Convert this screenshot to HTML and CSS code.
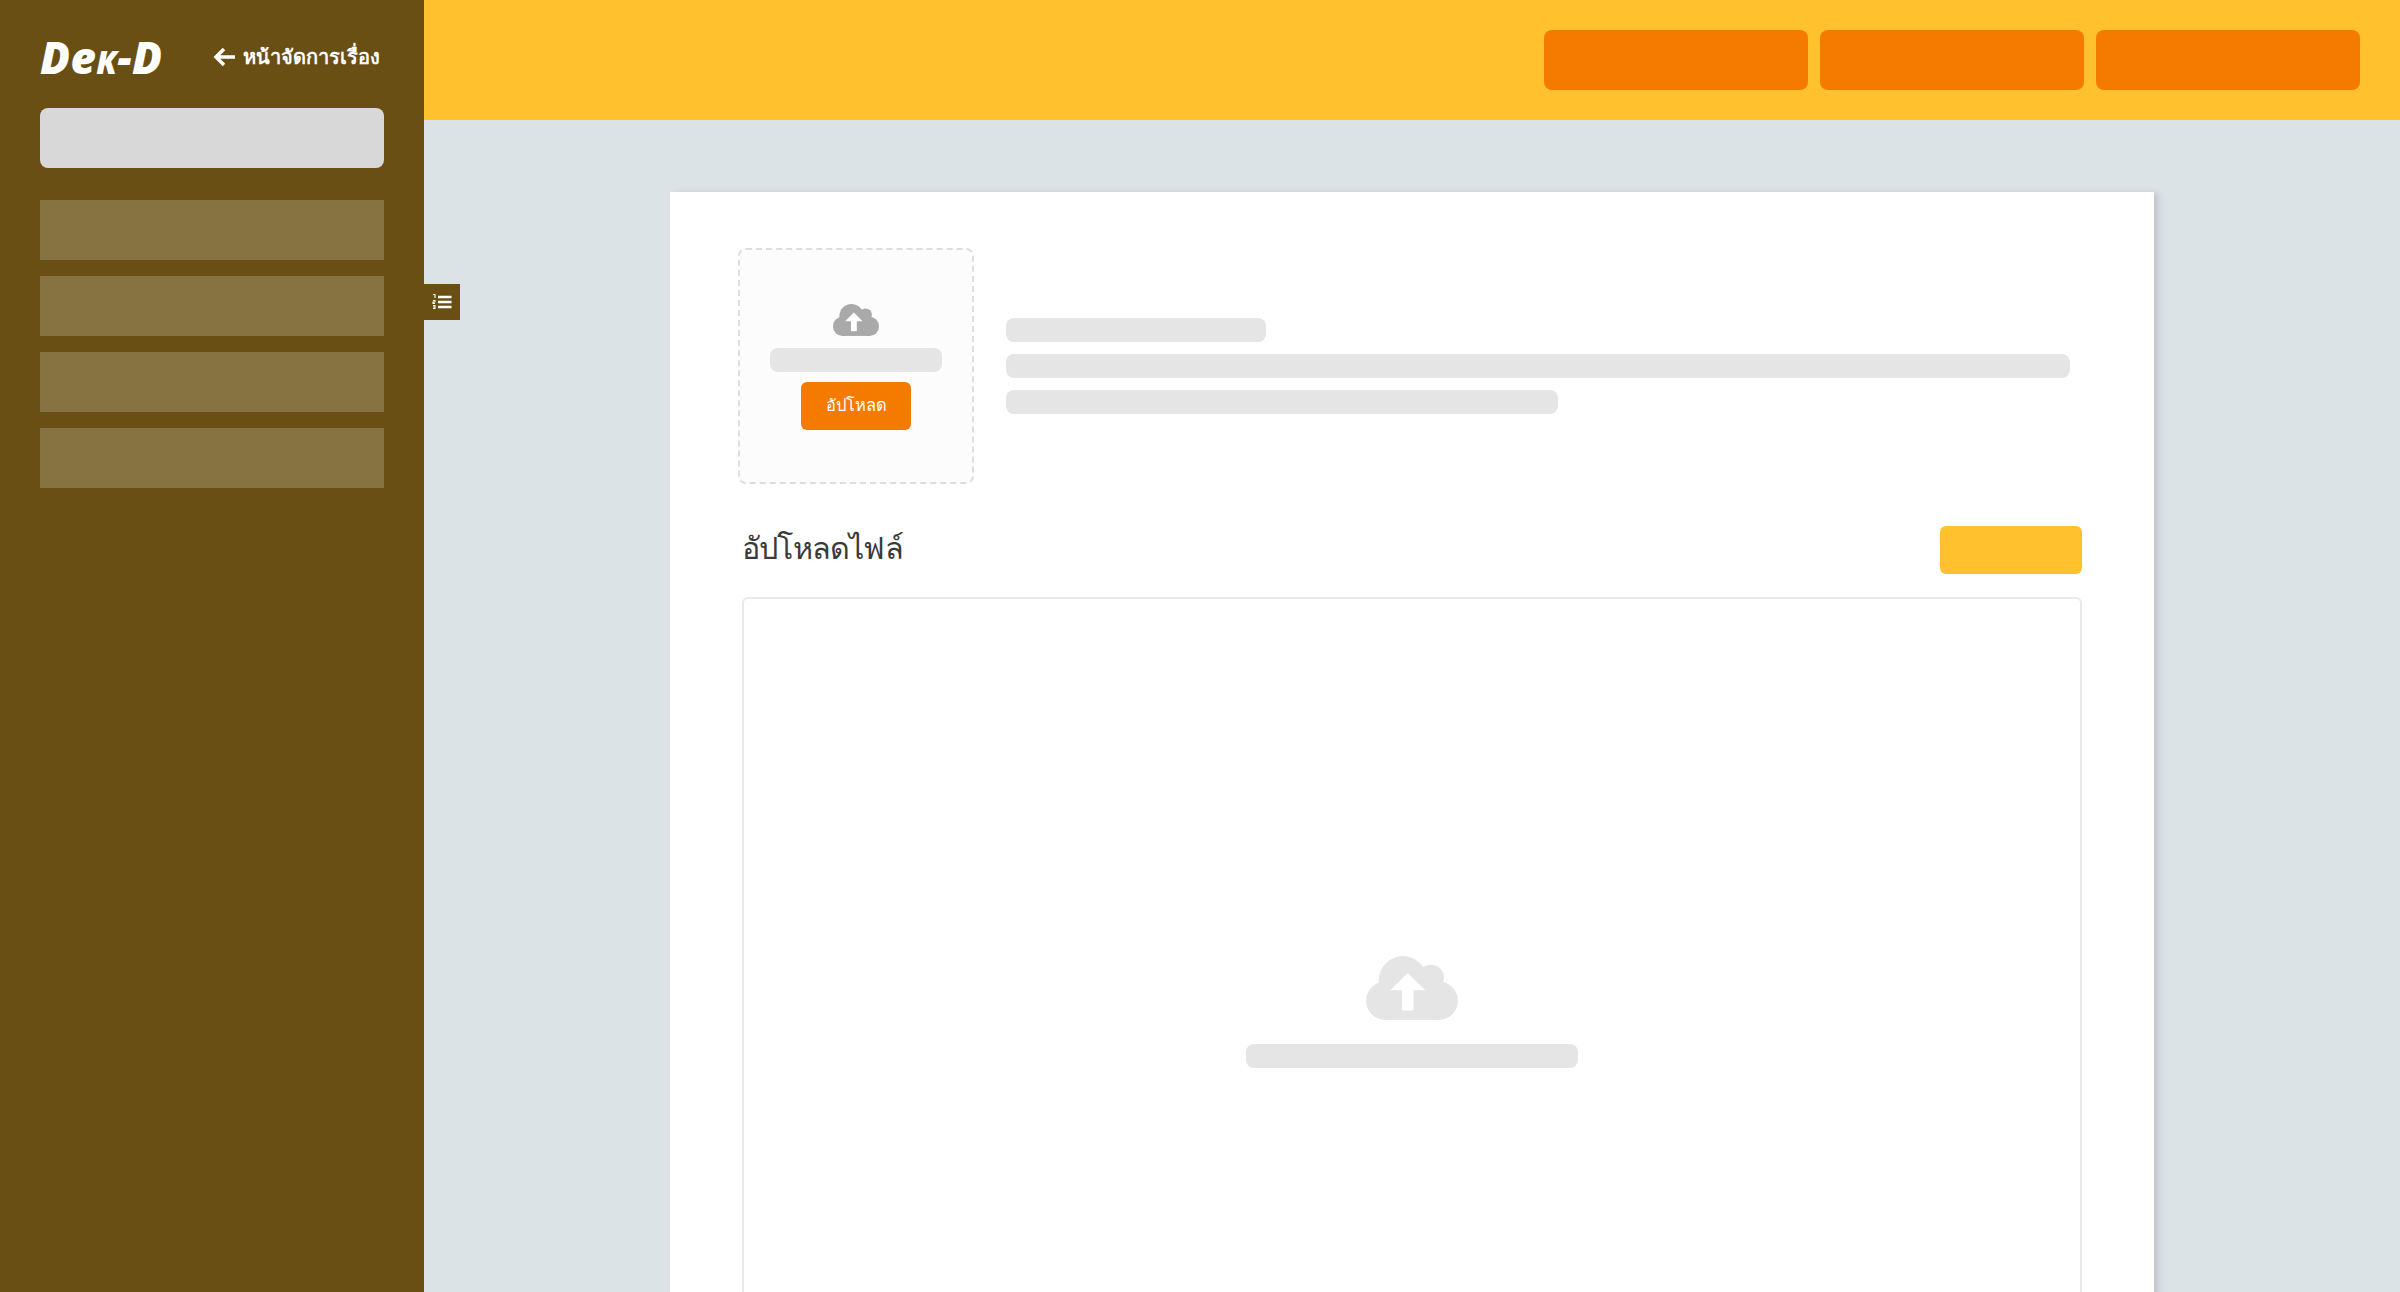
FILE: index.html
```html
<!DOCTYPE html>
<html lang="th">

<head>
  <meta charset="UTF-8">
  <meta name="viewport" content="width=device-width, initial-scale=1.0">
  <title>อัปโหลดไฟล์</title>
  <link rel="stylesheet" href="styles.css">
</head>

<body>

  <svg class="icon-defs" width="0" height="0">
    <symbol id="cloudUpload" viewBox="0 0 274 190">
      <g fill="currentColor">
        <circle cx="110" cy="72" r="72" />
        <circle cx="194" cy="64" r="38" />
        <circle cx="57" cy="133" r="57" />
        <circle cx="217" cy="133" r="57" />
        <rect x="57" y="70" width="160" height="120" />
      </g>
      <path fill="#fff" d="M124 50l53 52h-35v56a4 4 0 0 1-4 4h-27a4 4 0 0 1-4-4v-56h-35z" />
    </symbol>
  </svg>

  <div class="layout">
    <aside class="sidebar">
      <div class="sidebar-top">
        <span class="logo">De<span class="logo-k">k</span>-D</span>
        <a class="back-link" href="#">
          <svg class="back-icon" viewBox="0 0 22 20">
            <path d="M11 2l-8 8 8 8M3 10h19" />
          </svg>
          หน้าจัดการเรื่อง
        </a>
      </div>
      <div class="search-box"></div>
      <div class="side-menu">
        <div class="side-item"></div>
        <div class="side-item"></div>
        <div class="side-item"></div>
        <div class="side-item"></div>
      </div>
      <div class="side-toggle">
        <svg class="toggle-icon" viewBox="0 0 20 16">
          <path class="toggle-nums" d="M1 0.500h2v3.500M1 6.500h2v1.500h-2v1.500h2M1 11.500h2v1.500h-2h2v1.500h-2" />
          <path class="toggle-lines" d="M6 3h13.500M6 8h13.500M6 13h13.500" />
        </svg>
      </div>
    </aside>

    <div class="main">
      <header class="topbar">
        <div class="top-btn"></div>
        <div class="top-btn"></div>
        <div class="top-btn"></div>
      </header>

      <div class="content">
        <section class="card">
          <div class="cover-row">
            <div class="cover-box">
              <svg class="cloud-small"><use href="#cloudUpload" /></svg>
              <div class="bar cover-bar"></div>
              <button class="upload-btn">อัปโหลด</button>
            </div>
            <div class="cover-info">
              <div class="bar info-short"></div>
              <div class="bar info-long"></div>
              <div class="bar info-mid"></div>
            </div>
          </div>

          <div class="file-head">
            <h2>อัปโหลดไฟล์</h2>
            <div class="file-btn"></div>
          </div>

          <div class="drop-area">
            <svg class="cloud-large"><use href="#cloudUpload" /></svg>
            <div class="bar drop-bar"></div>
          </div>
        </section>
      </div>
    </div>
  </div>

</body>

</html>
```

FILE: styles.css
```css
html,
body {
  height: 100%;
}

body {
  margin: 0;
  overflow: hidden;
  font-family: "Noto Sans", "Open Sans", "DejaVu Sans", sans-serif;
  background: #dce3e6;
}

.icon-defs {
  position: absolute;
}

.layout {
  display: flex;
  height: 1292px;
  overflow: hidden;
}

/* Sidebar */
.sidebar {
  position: relative;
  flex: 0 0 424px;
  box-sizing: border-box;
  padding: 0 40px;
  background: #694f14;
}

.sidebar-top {
  display: flex;
  align-items: center;
  justify-content: space-between;
  height: 108px;
  padding-top: 6px;
  box-sizing: border-box;
}

.logo {
  font-family: "Open Sans", sans-serif;
  font-size: 44px;
  font-style: italic;
  font-weight: 800;
  letter-spacing: 0.300px;
  color: #fff;
}

.logo-k {
  font-variant: small-caps;
}

.back-link {
  display: flex;
  align-items: center;
  gap: 8px;
  margin-right: 4px;
  font-size: 20px;
  font-weight: 600;
  color: #fff;
  text-decoration: none;
}

.back-icon {
  width: 22px;
  height: 20px;
  fill: none;
  stroke: #fff;
  stroke-width: 3.500;
}

.search-box {
  height: 60px;
  border-radius: 8px;
  background: #d8d8d8;
}

.side-menu {
  display: flex;
  flex-direction: column;
  gap: 16px;
  margin-top: 32px;
}

.side-item {
  height: 60px;
  background: #877341;
}

.side-toggle {
  position: absolute;
  top: 284px;
  left: 424px;
  display: flex;
  align-items: center;
  justify-content: center;
  width: 36px;
  height: 36px;
  background: #694f14;
}

.toggle-icon {
  width: 20px;
  height: 16px;
  fill: none;
  stroke: #fff;
}

.toggle-nums {
  stroke-width: 1.100;
}

.toggle-lines {
  stroke-width: 2.600;
}

/* Top bar */
.main {
  flex: 1;
  min-width: 0;
}

.topbar {
  display: flex;
  justify-content: flex-end;
  gap: 12px;
  box-sizing: border-box;
  height: 120px;
  padding: 30px 40px 0 0;
  background: #ffc12e;
}

.top-btn {
  width: 264px;
  height: 60px;
  border-radius: 8px;
  background: #f47b00;
}

/* Content */
.content {
  padding-top: 72px;
}

.card {
  box-sizing: border-box;
  width: 1484px;
  height: 1200px;
  margin: 0 auto;
  padding: 56px 72px 0 68px;
  background: #fff;
  box-shadow: 5px 0 6px -1px rgba(120, 130, 140, 0.3);
}

.bar {
  height: 24px;
  border-radius: 8px;
  background: #e5e5e5;
}

.cover-row {
  display: flex;
  align-items: center;
  gap: 32px;
}

.cover-box {
  display: flex;
  flex-direction: column;
  align-items: center;
  flex: 0 0 236px;
  box-sizing: border-box;
  height: 236px;
  padding-top: 54px;
  border: 2px dashed #dedede;
  border-radius: 8px;
  background: #fcfcfc;
}

.cloud-small {
  width: 46px;
  height: 32px;
  color: #a9a9a9;
}

.cover-bar {
  width: 172px;
  margin-top: 12px;
}

.upload-btn {
  width: 110px;
  height: 48px;
  margin-top: 10px;
  padding: 0 0 3px;
  border: none;
  border-radius: 6px;
  font-family: inherit;
  font-size: 16.500px;
  color: #fff;
  background: #f47b00;
}

.cover-info {
  flex: 1;
  display: flex;
  flex-direction: column;
  gap: 12px;
  padding-right: 12px;
}

.info-short {
  width: 260px;
}

.info-long {
  width: 100%;
}

.info-mid {
  width: 552px;
}

.file-head {
  display: flex;
  align-items: center;
  justify-content: space-between;
  margin: 42px 0 23px 4px;
}

.file-head h2 {
  margin: -4px 0 0;
  font-size: 30.500px;
  font-weight: 400;
  letter-spacing: -0.800px;
  color: #3a3a3a;
}

.file-btn {
  width: 142px;
  height: 48px;
  border-radius: 6px;
  background: #ffc12e;
}

.drop-area {
  display: flex;
  flex-direction: column;
  align-items: center;
  box-sizing: border-box;
  height: 900px;
  margin-left: 4px;
  padding-top: 357px;
  border: 2px solid #e8e8e8;
  border-radius: 6px;
}

.cloud-large {
  width: 92px;
  height: 64px;
  color: #e5e5e5;
}

.drop-bar {
  width: 332px;
  margin-top: 24px;
}
```
